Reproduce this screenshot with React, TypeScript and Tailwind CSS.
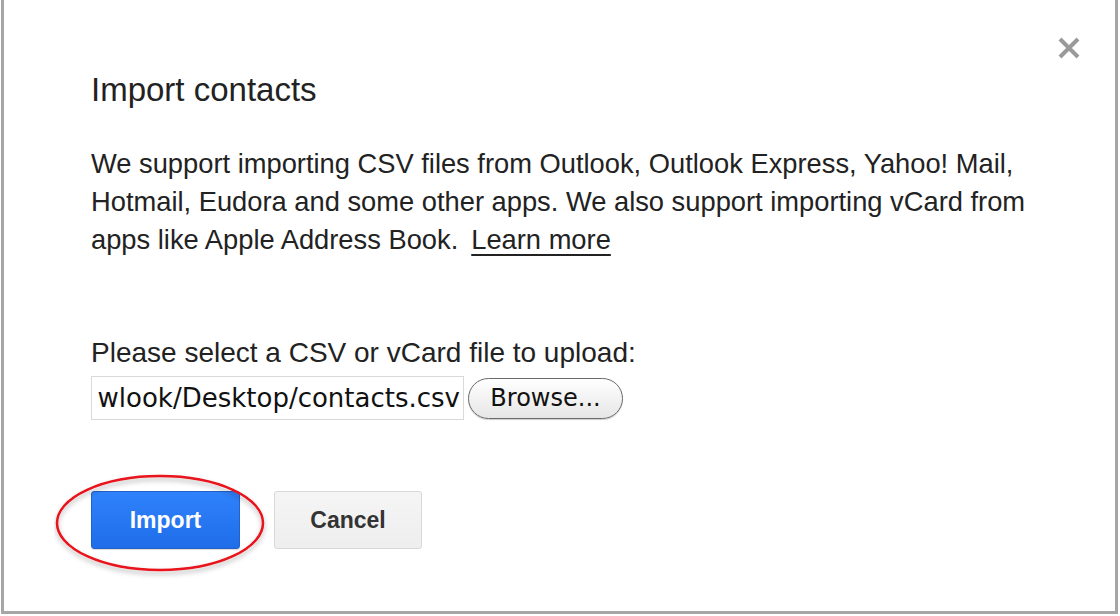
import React from "react";

export default function App() {
  return (
    <div className="w-[1120px] h-[616px] bg-white overflow-hidden">
      <div className="relative ml-px w-[1117px] h-[614px] border-x-[3px] border-b-[3px] border-[#a6a6a6] bg-white pt-[70px] pl-[87px] font-['Liberation_Sans',Arial,sans-serif] text-[#222]">
        <button type="button" aria-label="Close" className="absolute right-[34px] top-[36px] w-6 h-6">
          <svg viewBox="0 0 24 24" className="w-6 h-6">
            <path d="M3 3 L21 21 M21 3 L3 21" stroke="#9a9a9a" strokeWidth="4" strokeLinecap="butt" />
          </svg>
        </button>

        <h1 className="text-[33px] leading-[40px] font-normal">Import contacts</h1>

        <p className="mt-[35px] w-[960px] text-[27.3px] leading-[38px]">
          We support importing CSV files from Outlook, Outlook Express, Yahoo! Mail, Hotmail, Eudora and some other apps. We also support importing vCard from apps like Apple Address Book.
          <a href="#" className="ml-[13px] underline underline-offset-[5px] decoration-2">Learn more</a>
        </p>

        <div className="mt-[75px] text-[28px] leading-[38px]">Please select a CSV or vCard file to upload:</div>

        <div className="mt-[4px] flex items-center gap-[4px]">
          <div className="w-[373px] h-[44px] border border-[#d9d9d9] flex items-center justify-end overflow-hidden pr-[3px] font-['DejaVu_Sans',sans-serif] text-[26px] text-[#111] whitespace-nowrap">
            wlook/Desktop/contacts.csv
          </div>
          <button
            type="button"
            className="w-[155px] h-[41px] rounded-full border-[1.5px] border-[#6a6a6a] bg-gradient-to-b from-white to-[#e6e6e6] font-['DejaVu_Sans',sans-serif] text-[24px] text-[#111] flex items-center justify-center shadow-[0_1px_1px_rgba(0,0,0,0.2)]"
          >
            Browse...
          </button>
        </div>

        <div className="mt-[71px] flex gap-[34px]">
          <button
            type="button"
            className="w-[149px] h-[58px] rounded-[3px] border border-[#2462c8] bg-gradient-to-b from-[#2f82fb] to-[#1f6de9] text-white font-bold text-[23px] shadow-[0_1px_1px_rgba(0,0,0,0.15)]"
          >
            Import
          </button>
          <button
            type="button"
            className="w-[148px] h-[58px] rounded-[3px] border border-[#d8d8d8] bg-gradient-to-b from-[#f5f5f5] to-[#eeeeee] text-[#333] font-bold text-[23px]"
          >
            Cancel
          </button>
        </div>

        <svg className="absolute left-[50px] top-[470px] pointer-events-none" width="224" height="112" viewBox="0 0 224 112">
          <defs>
            <filter id="sh" x="-10%" y="-10%" width="120%" height="130%">
              <feDropShadow dx="0" dy="3" stdDeviation="2.5" floodColor="#000" floodOpacity="0.3" />
            </filter>
          </defs>
          <ellipse cx="106" cy="53" rx="103" ry="47" fill="none" stroke="#e8121a" strokeWidth="2.5" filter="url(#sh)" />
        </svg>
      </div>
    </div>
  );
}
